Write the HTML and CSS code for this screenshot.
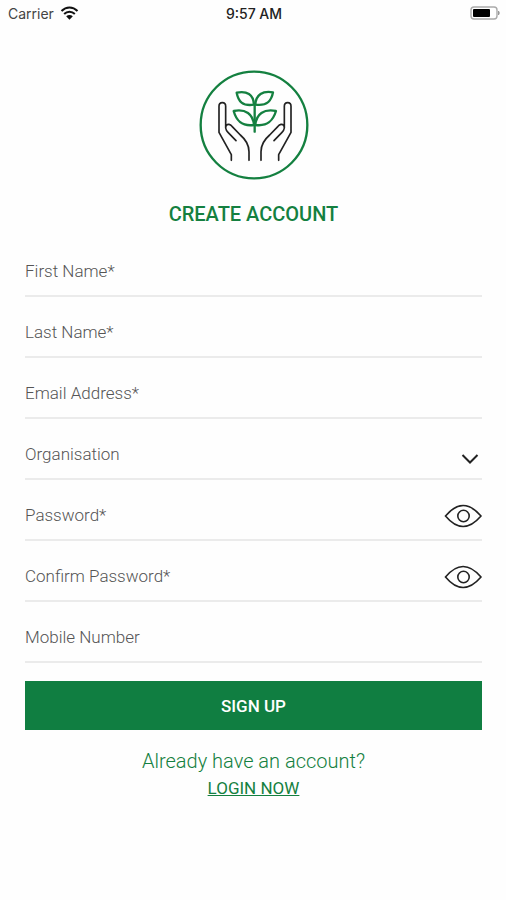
FILE: index.html
```html
<!DOCTYPE html>
<html lang="en">
<head>
<meta charset="utf-8">
<meta name="viewport" content="width=device-width, initial-scale=1">
<title>Create Account</title>
<link rel="stylesheet" href="styles.css">
</head>
<body>
<header class="status">
  <div class="status-carrier">
    <span>Carrier</span>
    <svg class="wifi" viewBox="0 0 54 42" aria-hidden="true">
      <path d="M3 15C17 1 37 1 51 15M11 24C20 15 34 15 43 24" fill="none" stroke="#111" stroke-width="6"/>
      <path d="M17 31Q27 23 37 31L27 41Z" fill="#111"/>
    </svg>
  </div>
  <time class="status-time">9:57 AM</time>
  <svg class="battery" viewBox="0 0 30 14" aria-hidden="true">
    <rect x="1" y="1" width="26" height="12" rx="3" fill="#fff" stroke="#aaa" stroke-width="1.4"/>
    <rect x="3" y="3" width="17" height="8" rx="1" fill="#000"/>
    <path d="M28.500 5Q30 7 28.500 9Z" fill="#999" stroke="#999"/>
  </svg>
</header>
<main class="page">
  <svg class="logo" viewBox="27 30 330 330" role="img" aria-label="Two hands around a plant" fill="none" stroke-linecap="round" stroke-linejoin="round">
    <circle cx="192" cy="195" r="160" stroke="#148040" stroke-width="7"/>
    <g stroke="#222" stroke-width="5">
      <path d="M124 301V284L87 217V139Q87 128 97 128Q107 128 107 139V192M107 204Q107 192 117 193Q122 194 126 199L151 225Q177 247 177 275V301M107 192V204Q108 211 114 217L138 242"/>
      <path d="M266 301V284L303 217V139Q303 128 293 128Q283 128 283 139V192M283 204Q283 192 273 193Q268 194 264 199L239 225Q213 247 213 275V301M283 192V204Q282 211 276 217L252 242"/>
    </g>
    <g stroke="#148040" stroke-width="7">
      <path d="M194 132V215"/>
      <path d="M192 134C157 139 145 124 140 98C171 92 190 103 192 134Z"/>
      <path d="M196 134C231 139 244 124 249 97C218 92 198 103 196 134Z"/>
      <path d="M192 195C155 200 139 182 131 153C167 146 189 162 192 195Z"/>
      <path d="M196 195C233 200 249 182 258 153C221 146 199 162 196 195Z"/>
    </g>
  </svg>
  <h1 class="title">CREATE ACCOUNT</h1>
  <form class="form">
    <div class="field">
      <label for="first">First Name*</label>
      <input id="first" type="text" required>
    </div>
    <div class="field">
      <label for="last">Last Name*</label>
      <input id="last" type="text" required>
    </div>
    <div class="field">
      <label for="email">Email Address*</label>
      <input id="email" type="email" required>
    </div>
    <div class="field">
      <label for="organisation">Organisation</label>
      <select id="organisation"><option value=""></option></select>
      <svg class="chevron" viewBox="0 0 18 10" fill="none" stroke="#222" stroke-width="2" aria-hidden="true"><path d="M1.500 1L9 8.500L16.500 1"/></svg>
    </div>
    <div class="field">
      <label for="password">Password*</label>
      <input id="password" type="password" required>
      <button class="reveal" type="button" aria-label="Show password">
        <svg class="eye" viewBox="0 0 38 24" fill="none" stroke="#222" stroke-width="1.600" aria-hidden="true"><path d="M1.500 12Q19-9 37 12Q19 33 1.500 12Z"/><circle cx="19.500" cy="12" r="5.700"/></svg>
      </button>
    </div>
    <div class="field">
      <label for="confirm">Confirm Password*</label>
      <input id="confirm" type="password" required>
      <button class="reveal" type="button" aria-label="Show confirmed password">
        <svg class="eye" viewBox="0 0 38 24" fill="none" stroke="#222" stroke-width="1.600" aria-hidden="true"><path d="M1.500 12Q19-9 37 12Q19 33 1.500 12Z"/><circle cx="19.500" cy="12" r="5.700"/></svg>
      </button>
    </div>
    <div class="field">
      <label for="mobile">Mobile Number</label>
      <input id="mobile" type="tel">
    </div>
    <button class="submit" type="submit">SIGN UP</button>
  </form>
  <p class="prompt">Already have an account?</p>
  <a class="login" href="#login">LOGIN NOW</a>
</main>
</body>
</html>
```
FILE: styles.css
```css
* {
  box-sizing: border-box;
}

body {
  margin: 0;
  background: #fefefe;
  color: #148040;
  font-family: Roboto, "Liberation Sans", sans-serif;
}

.status {
  display: grid;
  grid-template-columns: 1fr auto 1fr;
  align-items: center;
  height: 26px;
  padding: 0 6px 0 8px;
  color: #222;
  font-family: Inter, "Liberation Sans", sans-serif;
  font-size: 14px;
}

.status-carrier {
  display: flex;
  align-items: center;
  gap: 6px;
  color: #444;
}

.wifi {
  width: 19px;
  height: 14px;
}

.status-time {
  font-weight: 500;
}

.battery {
  justify-self: end;
  width: 30px;
  height: 14px;
}

.page {
  display: flex;
  flex-direction: column;
  align-items: center;
  padding: 44px 24px 24px 25px;
}

.logo {
  width: 110px;
  height: 110px;
}

.title {
  margin: 22px 0 10px;
  font-size: 20px;
  line-height: 24px;
  font-weight: 500;
}

.form {
  width: 100%;
}

.field {
  display: grid;
  grid-template-columns: 1fr auto;
  align-items: center;
  height: 61px;
  padding-top: 10px;
  border-bottom: 2px solid #ebebeb;
}

.field label {
  grid-area: 1 / 1;
  color: #555;
  font-size: 17px;
  font-weight: 300;
  pointer-events: none;
}

.field input,
.field select {
  grid-area: 1 / 1 / 2 / 3;
  width: 100%;
  height: 100%;
  padding: 0;
  border: 0;
  outline: 0;
  appearance: none;
  background: transparent;
  color: #222;
  font: inherit;
}

.chevron {
  grid-area: 1 / 2;
  width: 18px;
  height: 10px;
  margin: 10px 3px 0 0;
  pointer-events: none;
}

.reveal {
  grid-area: 1 / 2;
  display: flex;
  margin-top: 2px;
  padding: 0;
  border: 0;
  background: transparent;
}

.eye {
  width: 38px;
  height: 24px;
}

.submit {
  width: 100%;
  height: 49px;
  margin-top: 18px;
  border: 0;
  background: #107e41;
  color: #fff;
  font: inherit;
  font-size: 17px;
  font-weight: 500;
}

.prompt {
  margin: 18px 0 1px;
  font-size: 20px;
  font-weight: 300;
  line-height: 26px;
}

.login {
  color: inherit;
  font-size: 17px;
  line-height: 26px;
}
```
